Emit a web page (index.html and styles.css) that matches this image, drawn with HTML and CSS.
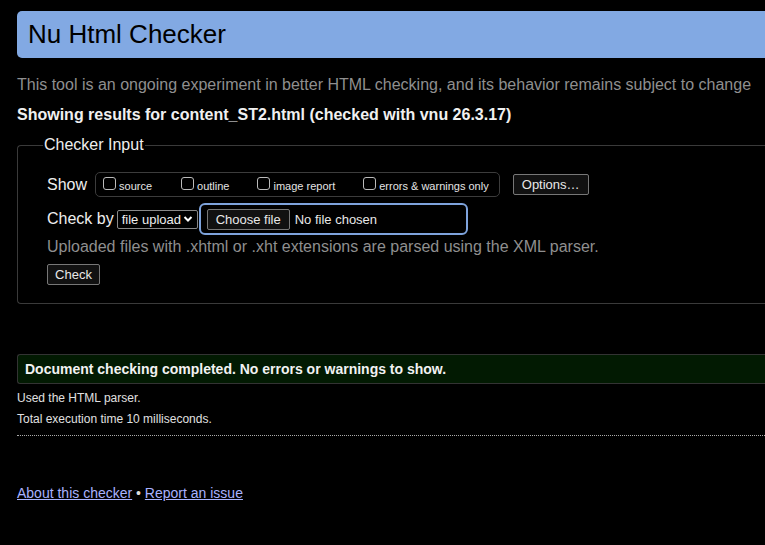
FILE: index.html
```html
<!DOCTYPE html>
<html lang="en">
<head>
<meta charset="utf-8">
<title>Nu Html Checker</title>
<link rel="stylesheet" href="styles.css">
</head>
<body>
<div class="page">
  <h1 class="title">Nu Html Checker</h1>
  <p class="intro">This tool is an ongoing experiment in better HTML checking, and its behavior remains subject to change</p>
  <p class="showing">Showing results for content_ST2.html (checked with vnu 26.3.17)</p>
  <fieldset class="input">
    <legend>Checker Input</legend>
    <div class="row show-row">
      <span class="label">Show</span>
      <div class="opts">
        <label class="opt"><span class="cb"></span>source</label>
        <label class="opt"><span class="cb"></span>outline</label>
        <label class="opt"><span class="cb"></span>image report</label>
        <label class="opt"><span class="cb"></span>errors &amp; warnings only</label>
      </div>
      <button class="btn options">Options…</button>
    </div>
    <div class="row check-row">
      <span class="label">Check by</span>
      <span class="select">file upload<svg width="10" height="8" viewBox="0 0 10 8"><path d="M1.5 2 L5 5.5 L8.5 2" fill="none" stroke="#fff" stroke-width="2"/></svg></span>
      <span class="file"><button class="btn choose">Choose file</button><span class="nofile">No file chosen</span></span>
    </div>
    <p class="hint">Uploaded files with .xhtml or .xht extensions are parsed using the XML parser.</p>
    <button class="btn check">Check</button>
  </fieldset>
  <div class="success">Document checking completed. No errors or warnings to show.</div>
  <p class="small">Used the HTML parser.</p>
  <p class="small">Total execution time 10 milliseconds.</p>
  <hr class="dots">
  <p class="footer"><a href="#">About this checker</a> • <a href="#">Report an issue</a></p>
</div>
</body>
</html>
```
FILE: styles.css
```css
html, body {
  margin: 0;
  background: #000;
  overflow: hidden;
}
body {
  font-family: "Liberation Sans", Arial, sans-serif;
  color: #e8e8e8;
}
.page {
  width: 820px;
  padding: 11px 0 0 17px;
}
.title {
  margin: 0;
  height: 47px;
  box-sizing: border-box;
  padding: 8px 0 0 11px;
  background: #82a9e3;
  color: #000;
  font-size: 26px;
  font-weight: normal;
  border-radius: 5px 0 0 5px;
  line-height: 30px;
}
.intro {
  margin: 17px 0 0;
  color: #8f8f8f;
  font-size: 16px;
  line-height: 20px;
}
.showing {
  margin: 10px 0 0;
  font-weight: bold;
  font-size: 16px;
  line-height: 20px;
  color: #f0f0f0;
}
.input {
  margin: 11px 0 0;
  padding: 18px 0 18px 29px;
  border: 1px solid #3a3a3a;
  border-radius: 4px 0 0 4px;
  border-right: none;
  min-inline-size: auto;
}
.input legend {
  padding: 0 1px;
  margin-left: -4px;
  font-size: 16px;
  color: #eee;
}
.row {
  display: flex;
  align-items: center;
}
.label {
  font-size: 16px;
  color: #eee;
}
.opts {
  display: flex;
  align-items: center;
  margin-left: 8px;
  height: 23px;
  padding: 0 10px 0 7px;
  border: 1px solid #3c3c3c;
  border-radius: 5px;
}
.opt {
  display: flex;
  align-items: center;
  font-size: 11px;
  color: #e4e4e4;
  margin-right: 28px;
  padding-top: 3px;
}
.opt:first-child { margin-right: 29px; }
.opt:last-child { margin-right: 0; }
.cb {
  width: 11px;
  height: 11px;
  border: 1px solid #bbb;
  border-radius: 3px;
  margin-right: 3px;
  position: relative;
  top: -3px;
}
.btn {
  font-family: "Liberation Sans", Arial, sans-serif;
  font-size: 13px;
  background: #111;
  color: #e8e8e8;
  border: 1px solid #777;
  border-radius: 2px;
  padding: 0 8px;
  height: 21px;
  line-height: 19px;
}
.options {
  margin-left: 13px;
  width: 76px;
}
.check-row {
  margin-top: 6px;
}
.select {
  display: inline-flex;
  align-items: center;
  gap: 2px;
  margin-left: 3px;
  height: 19px;
  padding: 0 1px 0 4px;
  border: 1px solid #888;
  border-radius: 2px;
  font-size: 13px;
  color: #eee;
  box-sizing: border-box;
  width: 81px;
}
.file {
  display: inline-flex;
  align-items: center;
  margin-left: 1px;
  width: 269px;
  height: 32px;
  box-sizing: border-box;
  border: 2px solid #7ea3dc;
  border-radius: 6px;
  padding-left: 6px;
}
.choose {
  height: 21px;
  width: 83px;
  padding: 0;
  font-size: 13px;
}
.nofile {
  font-size: 13px;
  color: #e8e8e8;
  margin-left: 5px;
}
.hint {
  margin: 2px 0 0;
  font-size: 16px;
  color: #8f8f8f;
  line-height: 20px;
}
.check {
  margin-top: 7px;
  width: 53px;
  padding: 0;
}
.success {
  margin-top: 50px;
  height: 30px;
  box-sizing: border-box;
  border: 1px solid #333;
  border-right: none;
  border-radius: 3px 0 0 3px;
  background: #021a02;
  color: #f2f2f2;
  font-weight: bold;
  font-size: 14px;
  padding: 6px 0 0 7px;
}
.small {
  margin: 7px 0 0;
  font-size: 12px;
  line-height: 15px;
  color: #e0e0e0;
}
.small + .small { margin-top: 6px; }
.dots {
  margin: 8px 0 0;
  border: none;
  border-top: 1px dotted #aaa;
  height: 0;
}
.footer {
  margin: 49px 0 0;
  font-size: 14px;
  color: #ddd;
}
.footer a {
  color: #a9b3ff;
}
```
